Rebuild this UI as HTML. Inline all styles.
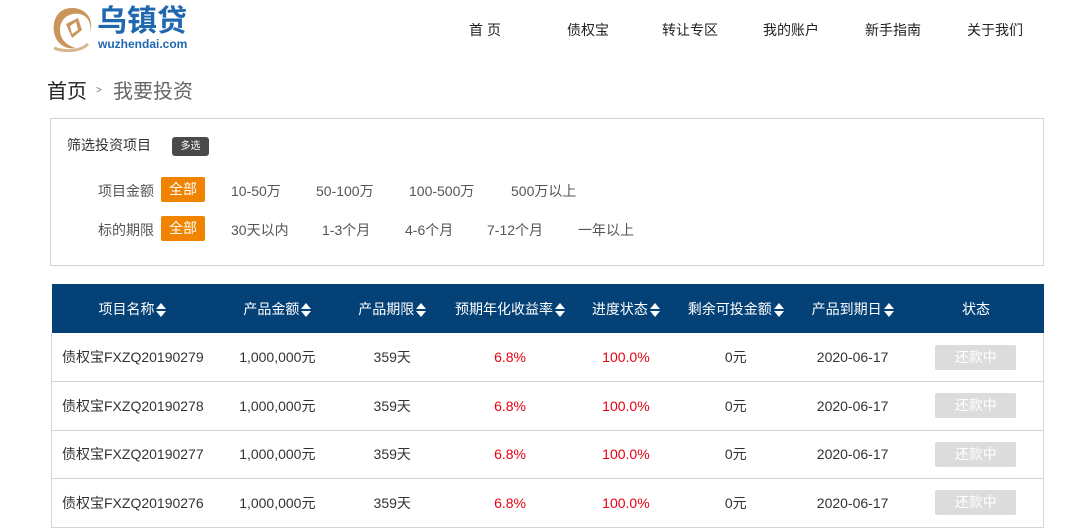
<!DOCTYPE html>
<html><head><meta charset="utf-8"><style>
*{margin:0;padding:0;box-sizing:border-box}
body{width:1076px;height:527px;overflow:hidden;background:#fff;position:relative;font-family:"Liberation Sans","Noto Sans CJK SC",sans-serif;color:#333}
.a{position:absolute;white-space:nowrap}
.nav{top:20px;font-size:14px;color:#222;transform:translateX(-50%)}
.f{font-size:14px;color:#555;top:0}
.btn{background:#f08300;color:#fff;border-radius:2px;width:44px;height:25px;line-height:25px;text-align:center;font-size:14px}
table{position:absolute;left:51px;top:284px;width:993px;border-collapse:collapse;font-size:14px}
th{background:#044177;color:#fff;font-weight:normal;height:49px;text-align:center}
td{height:48.5px;border-bottom:1px solid #d4d4d4;text-align:center;color:#333}
td:first-child{text-align:left;padding-left:10px}
tr td:first-child{border-left:1px solid #d4d4d4}
tr td:last-child{border-right:1px solid #d4d4d4}
.r{color:#e60012}
.s{display:inline-block;width:81px;height:25px;line-height:25px;background:#dcdcdc;color:#fff;border-radius:2px}
.ar{display:inline-block;width:10px;vertical-align:middle;margin-left:2px}
</style></head><body>
<svg class="a" style="left:50px;top:4px" width="44" height="48" viewBox="0 0 44 48">
<path d="M22 4 C8 4 2 16 4 28 C6 40 16 46 26 44 C18 42 10 36 10 26 C10 14 20 8 30 10 C38 12 42 20 40 28 C44 18 38 4 22 4Z" fill="#c9955a"/>
<path d="M16 20 L28 14 L32 26 L22 34 Z" fill="#c9955a"/>
<path d="M20 22 L26 18 L28 26 L22 30Z" fill="#fff"/>
<path d="M4 44 C14 48 30 48 38 40" stroke="#d8b58c" stroke-width="3" fill="none"/>
</svg>
<div class="a" style="left:97px;top:5px;font-size:30px;line-height:34px;font-weight:bold;color:#1f68b0;letter-spacing:0px">乌镇贷</div>
<div class="a" style="left:98px;top:37px;font-size:12px;line-height:14px;font-weight:bold;color:#1f68b0">wuzhendai.com</div>
<div class="a nav" style="left:485px">首 页</div>
<div class="a nav" style="left:588px">债权宝</div>
<div class="a nav" style="left:690px">转让专区</div>
<div class="a nav" style="left:791px">我的账户</div>
<div class="a nav" style="left:893px">新手指南</div>
<div class="a nav" style="left:995px">关于我们</div>
<div class="a" style="left:47px;top:75px;font-size:20px;color:#222">首页</div>
<div class="a" style="left:96px;top:85px;font-size:10px;color:#777">&gt;</div>
<div class="a" style="left:113px;top:75px;font-size:20px;color:#666">我要投资</div>
<div class="a" style="left:50px;top:118px;width:994px;height:148px;border:1px solid #d4d4d4"></div>
<div class="a" style="left:67px;top:135px;font-size:14px;color:#333">筛选投资项目</div>
<div class="a" style="left:172px;top:137px;width:37px;height:19px;background:#4a4a4a;color:#fff;border-radius:3px;font-size:10px;line-height:19px;text-align:center">多选</div>
<div class="a f" style="left:98px;top:181px">项目金额</div>
<div class="a btn" style="left:161px;top:177px">全部</div>
<div class="a f" style="left:231px;top:181px">10-50万</div>
<div class="a f" style="left:316px;top:181px">50-100万</div>
<div class="a f" style="left:409px;top:181px">100-500万</div>
<div class="a f" style="left:511px;top:181px">500万以上</div>
<div class="a f" style="left:98px;top:220px">标的期限</div>
<div class="a btn" style="left:161px;top:216px">全部</div>
<div class="a f" style="left:231px;top:220px">30天以内</div>
<div class="a f" style="left:322px;top:220px">1-3个月</div>
<div class="a f" style="left:405px;top:220px">4-6个月</div>
<div class="a f" style="left:487px;top:220px">7-12个月</div>
<div class="a f" style="left:578px;top:220px">一年以上</div>
<table>
<colgroup><col style="width:162px"><col style="width:128px"><col style="width:102px"><col style="width:134px"><col style="width:98px"><col style="width:122px"><col style="width:112px"><col style="width:135px"></colgroup>
<tr>
<th>项目名称<svg class="ar" viewBox="0 0 10 16" height="16"><path d="M0 7L5 1L10 7Z M0 9L5 15L10 9Z" fill="#fff"/></svg></th>
<th>产品金额<svg class="ar" viewBox="0 0 10 16" height="16"><path d="M0 7L5 1L10 7Z M0 9L5 15L10 9Z" fill="#fff"/></svg></th>
<th>产品期限<svg class="ar" viewBox="0 0 10 16" height="16"><path d="M0 7L5 1L10 7Z M0 9L5 15L10 9Z" fill="#fff"/></svg></th>
<th>预期年化收益率<svg class="ar" viewBox="0 0 10 16" height="16"><path d="M0 7L5 1L10 7Z M0 9L5 15L10 9Z" fill="#fff"/></svg></th>
<th>进度状态<svg class="ar" viewBox="0 0 10 16" height="16"><path d="M0 7L5 1L10 7Z M0 9L5 15L10 9Z" fill="#fff"/></svg></th>
<th>剩余可投金额<svg class="ar" viewBox="0 0 10 16" height="16"><path d="M0 7L5 1L10 7Z M0 9L5 15L10 9Z" fill="#fff"/></svg></th>
<th>产品到期日<svg class="ar" viewBox="0 0 10 16" height="16"><path d="M0 7L5 1L10 7Z M0 9L5 15L10 9Z" fill="#fff"/></svg></th>
<th>状态</th>
</tr>
<tr><td>债权宝FXZQ20190279</td><td>1,000,000元</td><td>359天</td><td class="r">6.8%</td><td class="r">100.0%</td><td>0元</td><td>2020-06-17</td><td><span class="s">还款中</span></td></tr>
<tr><td>债权宝FXZQ20190278</td><td>1,000,000元</td><td>359天</td><td class="r">6.8%</td><td class="r">100.0%</td><td>0元</td><td>2020-06-17</td><td><span class="s">还款中</span></td></tr>
<tr><td>债权宝FXZQ20190277</td><td>1,000,000元</td><td>359天</td><td class="r">6.8%</td><td class="r">100.0%</td><td>0元</td><td>2020-06-17</td><td><span class="s">还款中</span></td></tr>
<tr><td>债权宝FXZQ20190276</td><td>1,000,000元</td><td>359天</td><td class="r">6.8%</td><td class="r">100.0%</td><td>0元</td><td>2020-06-17</td><td><span class="s">还款中</span></td></tr>
</table>
</body></html>
